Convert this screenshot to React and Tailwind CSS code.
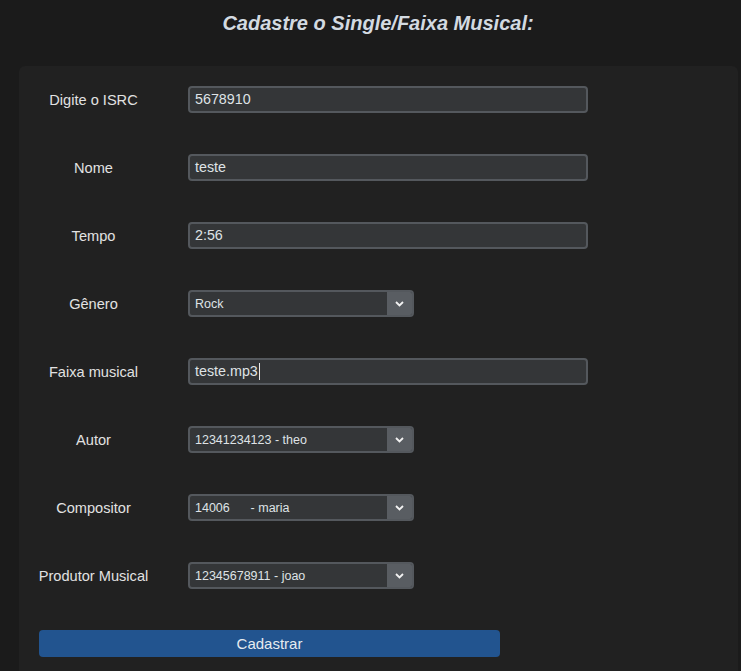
export default function App() {
  const Input = ({ value, caret }) => (
    <div className="flex h-[27px] w-[400px] items-center rounded-[4px] border-2 border-[#54585d] bg-[#343638] pl-[5px] text-[14.3px] text-[#dfe3e6]">
      <span>{value}</span>
      {caret && <span className="ml-[1px] inline-block h-[17px] w-[1px] bg-[#e8e8e8]" />}
    </div>
  );
  const Select = ({ value }) => (
    <div className="flex h-[27px] w-[226px] items-stretch overflow-hidden rounded-[4px] border-2 border-[#54585d] bg-[#343638] text-[12.5px] text-[#dfe3e6]">
      <div className="flex flex-1 items-center whitespace-pre pl-[5px] pt-[1px]">{value}</div>
      <div className="flex w-[25px] items-center justify-center bg-[#595d62]">
        <svg width="9" height="6" viewBox="0 0 9 6">
          <path d="M1 1 L4.5 4.5 L8 1" fill="none" stroke="#f2f2f2" strokeWidth="1.8" />
        </svg>
      </div>
    </div>
  );
  const rows = [
    ["Digite o ISRC", <Input value="5678910" />],
    ["Nome", <Input value="teste" />],
    ["Tempo", <Input value="2:56" />],
    ["Gênero", <Select value="Rock" />],
    ["Faixa musical", <Input value="teste.mp3" caret />],
    ["Autor", <Select value="12341234123 - theo" />],
    ["Compositor", <Select value={"14006      - maria"} />],
    ["Produtor Musical", <Select value="12345678911 - joao" />],
  ];
  return (
    <div className="min-h-[671px] bg-[#1b1b1b] font-['Liberation_Sans',Arial,sans-serif]">
      <div className="flex h-[66px] justify-center pl-[15px] pt-[8px]">
        <h1 className="text-[20px] font-bold italic text-[#d3dae1]">Cadastre o Single/Faixa Musical:</h1>
      </div>
      <div className="ml-[19px] mr-[3px] h-[605px] rounded-t-[6px] bg-[#212121] pl-[20px] pt-[20px]">
        <div className="flex flex-col gap-[41px]">
          {rows.map(([label, ctrl]) => (
            <div key={label} className="flex items-center">
              <div className="flex w-[109px] shrink-0 justify-center pt-[2px] text-[14.6px] text-[#e2e2e2]">
                <span className="whitespace-nowrap">{label}</span>
              </div>
              <div className="ml-[40px]">{ctrl}</div>
            </div>
          ))}
        </div>
        <button className="mt-[41px] h-[27px] w-[461px] rounded-[4px] bg-[#22548f] pt-[2px] text-[15px] text-[#e6ebf0]">
          Cadastrar
        </button>
      </div>
    </div>
  );
}
